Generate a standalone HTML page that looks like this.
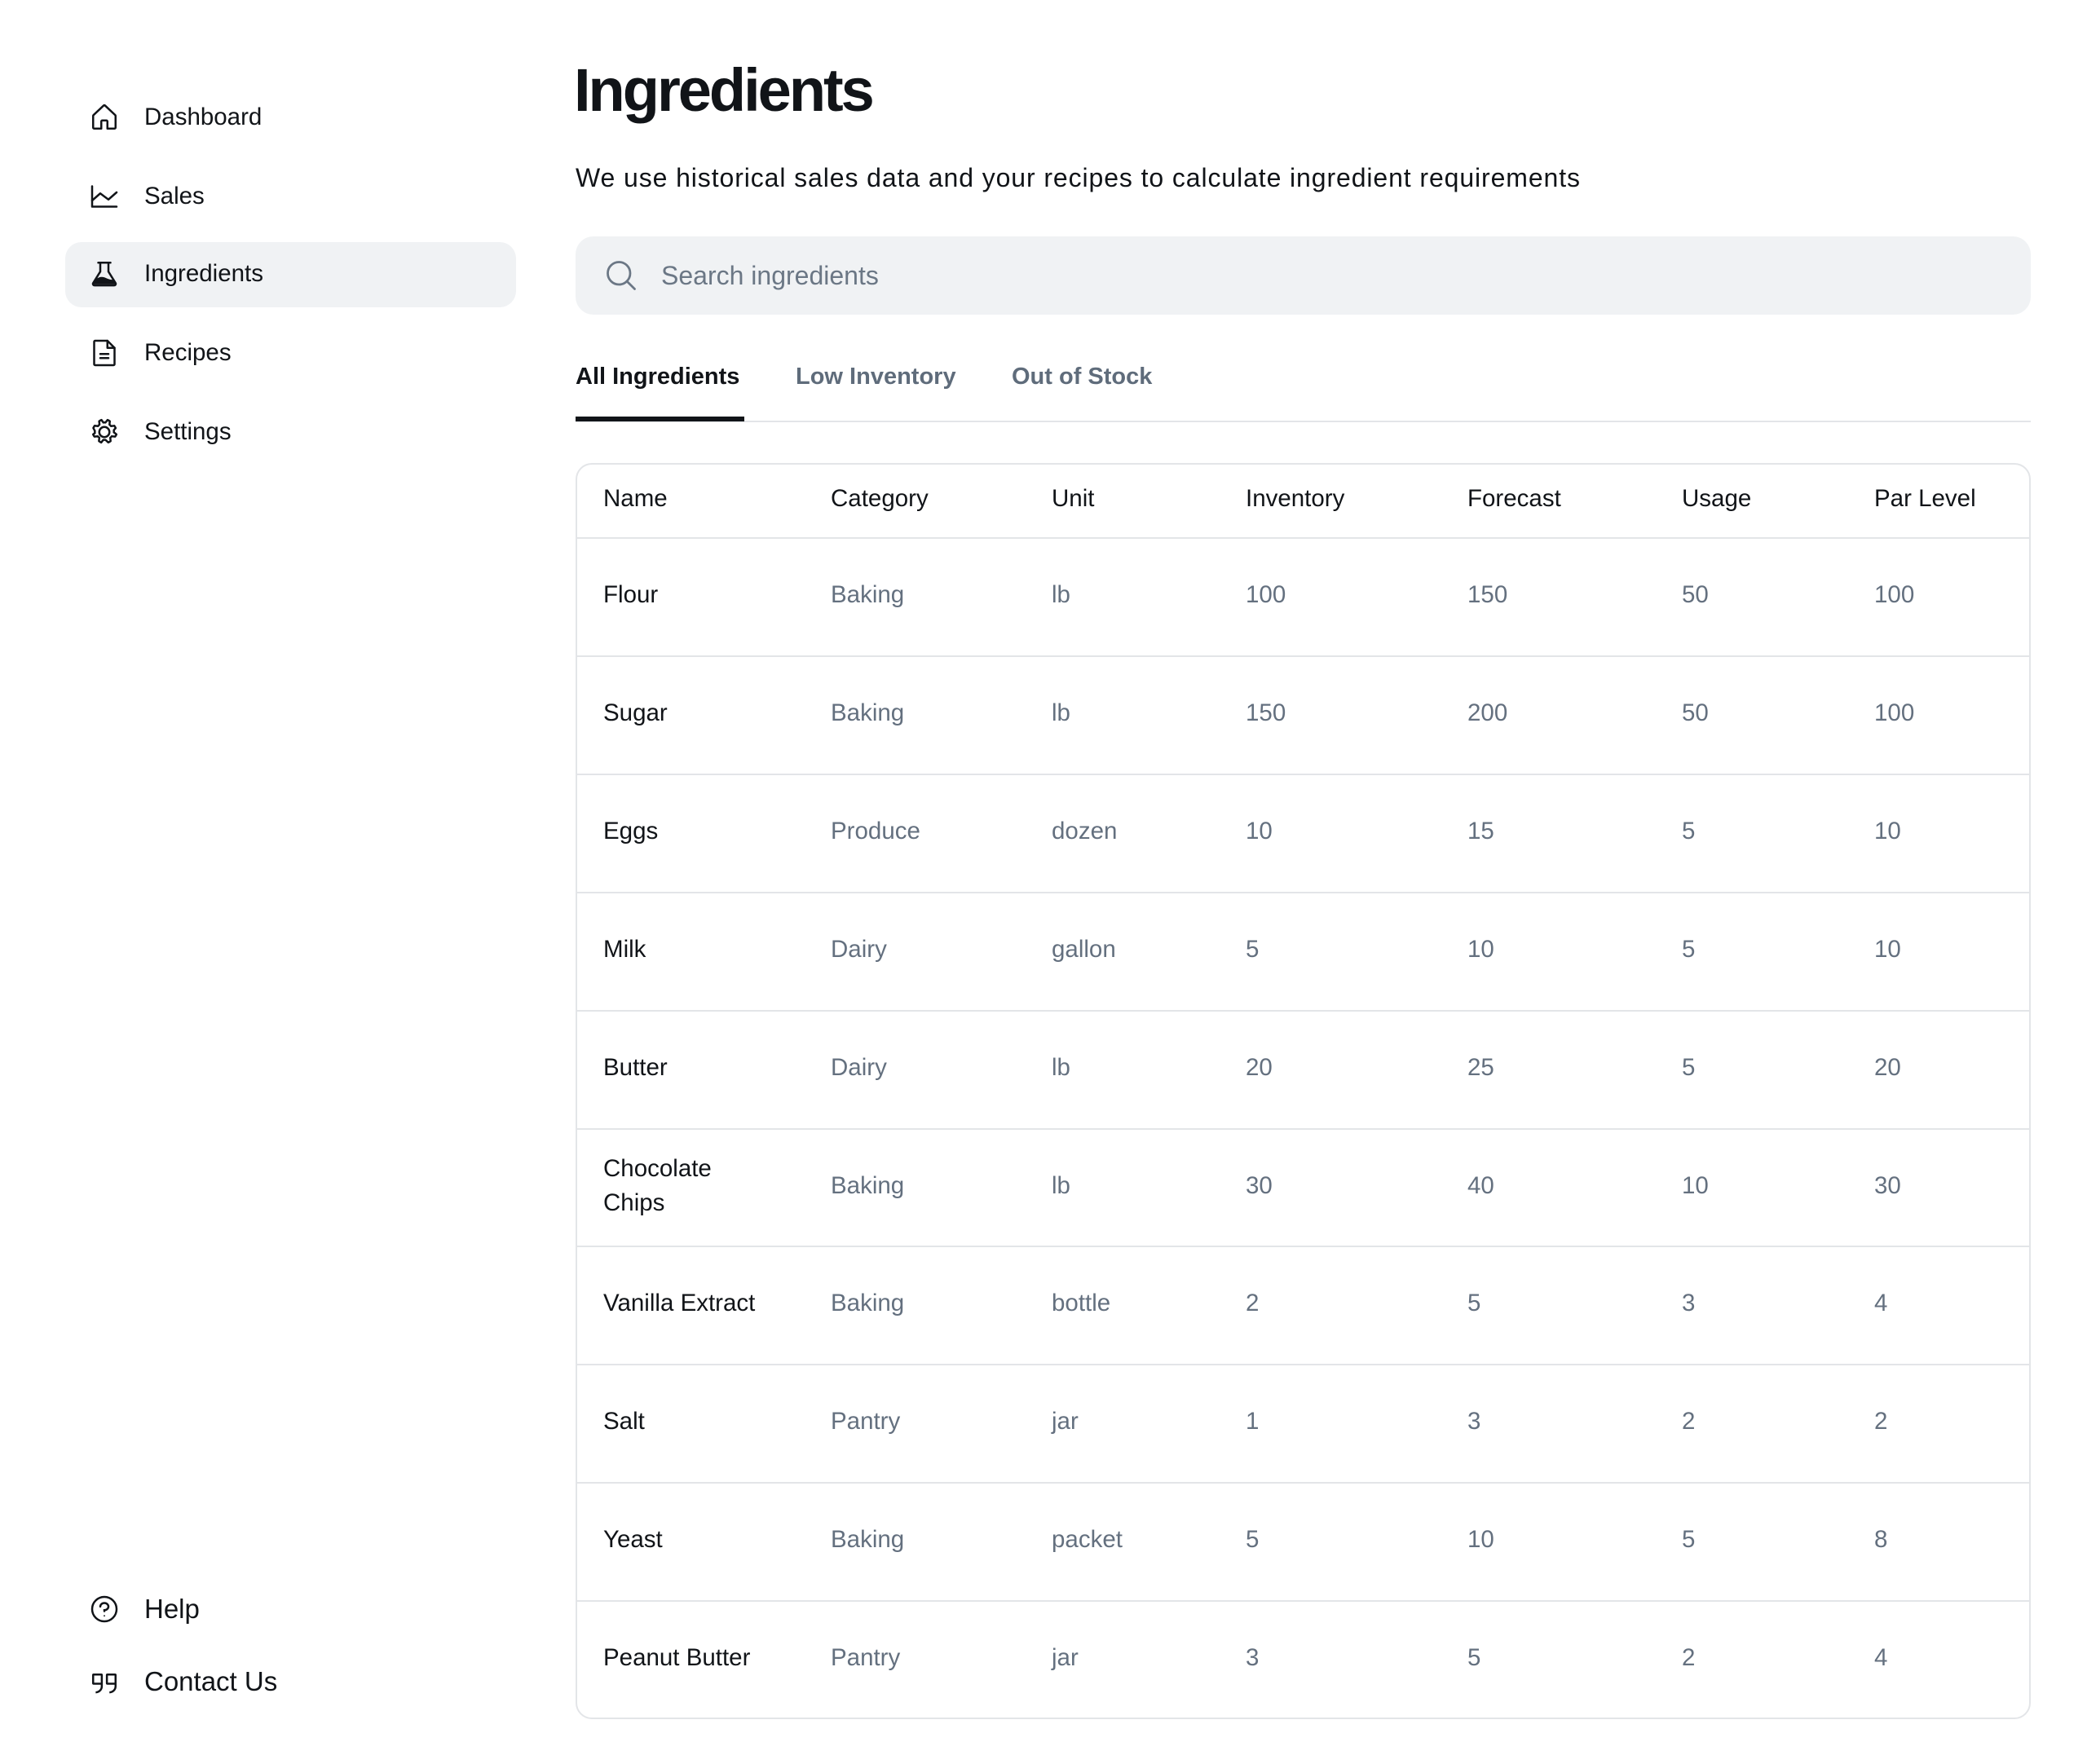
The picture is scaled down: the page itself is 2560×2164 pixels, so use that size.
<!DOCTYPE html>
<html><head><meta charset="utf-8"><style>
*{margin:0;padding:0;box-sizing:border-box}
body{width:2560px;height:2164px;background:#fff;font-family:"Liberation Sans",sans-serif;color:#111418;position:relative;overflow:hidden}
.a{position:absolute;white-space:nowrap}
.nav{position:absolute;left:108px;width:40px;height:40px}
.nt{position:absolute;left:177px;font-size:29.5px;line-height:40px;color:#111418}
.c{position:absolute;font-size:29.5px;line-height:40px;white-space:nowrap}
.g{color:#64707f}
</style></head><body>
<div class="a" style="left:80px;top:297px;width:553px;height:80px;background:#f0f2f4;border-radius:20px"></div>

<svg class="nav" style="top:124px" viewBox="0 0 256 256" fill="none" stroke="#111418" stroke-width="16" stroke-linejoin="round"><path d="M104 216V160a8 8 0 0 1 8-8h32a8 8 0 0 1 8 8v56h56a8 8 0 0 0 8-8V116a8 8 0 0 0-2.6-5.9l-80-75.5a8 8 0 0 0-10.8 0l-80 75.5A8 8 0 0 0 40 116v92a8 8 0 0 0 8 8Z"/></svg>
<div class="nt" style="top:124px">Dashboard</div>

<svg class="nav" style="top:221px" viewBox="0 0 256 256" fill="none" stroke="#111418" stroke-width="16" stroke-linecap="round" stroke-linejoin="round"><path d="M224 208H32V48"/><path d="M224 96l-64 56-64-48-64 56"/></svg>
<div class="nt" style="top:221px">Sales</div>

<svg class="nav" style="top:316px" viewBox="0 0 256 256"><path d="M96 40v70L40 200a12 12 0 0 0 10 18h156a12 12 0 0 0 10-18l-56-90V40" fill="none" stroke="#111418" stroke-width="16" stroke-linejoin="round"/><path d="M80 40h96" stroke="#111418" stroke-width="16" stroke-linecap="round"/><path d="M60 170q40-30 80-10t66 10l14 24a10 10 0 0 1-10 16H46a10 10 0 0 1-9-15Z" fill="#111418"/></svg>
<div class="nt" style="top:316px">Ingredients</div>

<svg class="nav" style="top:413px" viewBox="0 0 256 256" fill="none" stroke="#111418" stroke-width="16" stroke-linecap="round" stroke-linejoin="round"><path d="M200 224H56a8 8 0 0 1-8-8V40a8 8 0 0 1 8-8h96l56 56v128a8 8 0 0 1-8 8Z"/><path d="M152 32v56h56"/><path d="M96 136h64M96 168h64"/></svg>
<div class="nt" style="top:413px">Recipes</div>

<svg class="nav" style="top:510px" viewBox="0 0 256 256" fill="none" stroke="#111418" stroke-width="16" stroke-linejoin="round"><circle cx="128" cy="128" r="40"/><path d="M41.4 96.4a96 96 0 0 1 10.5-18l26.3 2.9a56 56 0 0 1 11.8-11.8L87.2 43.2a96 96 0 0 1 18-10.5L120 53.7a56 56 0 0 1 16.6 0l16.5-20.6a96 96 0 0 1 18 10.5l-2.9 26.3a56 56 0 0 1 11.8 11.8l26.3-2.9a96 96 0 0 1 10.5 18L202.3 113a56 56 0 0 1 0 16.6l20.6 16.5a96 96 0 0 1-10.5 18l-26.3-2.9a56 56 0 0 1-11.8 11.8l2.9 26.3a96 96 0 0 1-18 10.5L136.6 189.3a56 56 0 0 1-16.6 0l-16.5 20.6a96 96 0 0 1-18-10.5l2.9-26.3a56 56 0 0 1-11.8-11.8l-26.3 2.9a96 96 0 0 1-10.5-18L53.7 136a56 56 0 0 1 0-16.6Z"/></svg>
<div class="nt" style="top:510px">Settings</div>

<svg class="nav" style="top:1954px" viewBox="0 0 256 256" fill="none" stroke="#111418" stroke-width="16" stroke-linecap="round"><circle cx="128" cy="128" r="96"/><path d="M128 144v-8c17.7 0 32-12.5 32-28s-14.3-28-32-28-32 12.5-32 28"/><circle cx="128" cy="180" r="6" fill="#111418" stroke="none"/></svg>
<div class="nt" style="font-size:33px;top:1954px">Help</div>

<svg class="nav" style="top:2043px" viewBox="0 0 256 256" fill="none" stroke="#111418" stroke-width="16" stroke-linejoin="round"><path d="M108 144H44a4 4 0 0 1-4-4V76a4 4 0 0 1 4-4h60a4 4 0 0 1 4 4v88a48 48 0 0 1-48 48"/><path d="M216 144h-64a4 4 0 0 1-4-4V76a4 4 0 0 1 4-4h60a4 4 0 0 1 4 4v88a48 48 0 0 1-48 48"/></svg>
<div class="nt" style="top:2043px;font-size:33px">Contact Us</div>

<div class="a" style="left:704px;top:66px;font-size:74px;font-weight:bold;letter-spacing:-3px;line-height:90px">Ingredients</div>
<div class="a" style="left:706px;top:198px;font-size:32px;letter-spacing:0.9px;line-height:40px">We use historical sales data and your recipes to calculate ingredient requirements</div>

<div class="a" style="left:706px;top:290px;width:1785px;height:96px;background:#f0f2f4;border-radius:22px"></div>
<svg class="a" style="left:740px;top:316px" width="44" height="44" viewBox="0 0 256 256" fill="none" stroke="#6b7785" stroke-width="16" stroke-linecap="round"><circle cx="112" cy="112" r="80"/><path d="M168.6 168.6 224 224"/></svg>
<div class="a" style="left:811px;top:318px;font-size:32px;line-height:40px;color:#6b7785">Search ingredients</div>

<div class="a" style="left:706px;top:442px;font-size:29px;font-weight:bold;line-height:40px">All Ingredients</div>
<div class="a" style="left:976px;top:442px;font-size:29px;font-weight:bold;line-height:40px;color:#5f6c7b">Low Inventory</div>
<div class="a" style="left:1241px;top:442px;font-size:29px;font-weight:bold;line-height:40px;color:#5f6c7b">Out of Stock</div>
<div class="a" style="left:706px;top:516px;width:1785px;height:2px;background:#e3e5e8"></div>
<div class="a" style="left:706px;top:511px;width:207px;height:6px;background:#111418"></div>

<div class="a" style="left:706px;top:568px;width:1785px;height:1541px;border:2px solid #e3e5e8;border-radius:20px"></div>
<div id="t"></div>
<script>
var rows=[["Name","Category","Unit","Inventory","Forecast","Usage","Par Level"],
["Flour","Baking","lb","100","150","50","100"],
["Sugar","Baking","lb","150","200","50","100"],
["Eggs","Produce","dozen","10","15","5","10"],
["Milk","Dairy","gallon","5","10","5","10"],
["Butter","Dairy","lb","20","25","5","20"],
["Chocolate<br>Chips","Baking","lb","30","40","10","30"],
["Vanilla Extract","Baking","bottle","2","5","3","4"],
["Salt","Pantry","jar","1","3","2","2"],
["Yeast","Baking","packet","5","10","5","8"],
["Peanut Butter","Pantry","jar","3","5","2","4"]];
var xs=[740,1019,1290,1528,1800,2063,2299],h="";
for(var i=0;i<rows.length;i++){
 var cy=i==0?612:660+144.9*(i-1)+70;
 if(i>0)h+='<div class="a" style="left:708px;top:'+Math.round(660+144.9*(i-1)-1)+'px;width:1781px;height:2px;background:#e3e5e8"></div>';
 for(var j=0;j<7;j++){
  var two=rows[i][j].indexOf("<br>")>=0;
  var cls="c"+(i>0&&j>0?" g":"");
  h+='<div class="'+cls+'" style="left:'+xs[j]+'px;top:'+Math.round(cy-(two?42:20))+'px;line-height:'+(two?42:40)+'px">'+rows[i][j]+'</div>';
 }
}
document.getElementById("t").innerHTML=h;
</script>
</body></html>
